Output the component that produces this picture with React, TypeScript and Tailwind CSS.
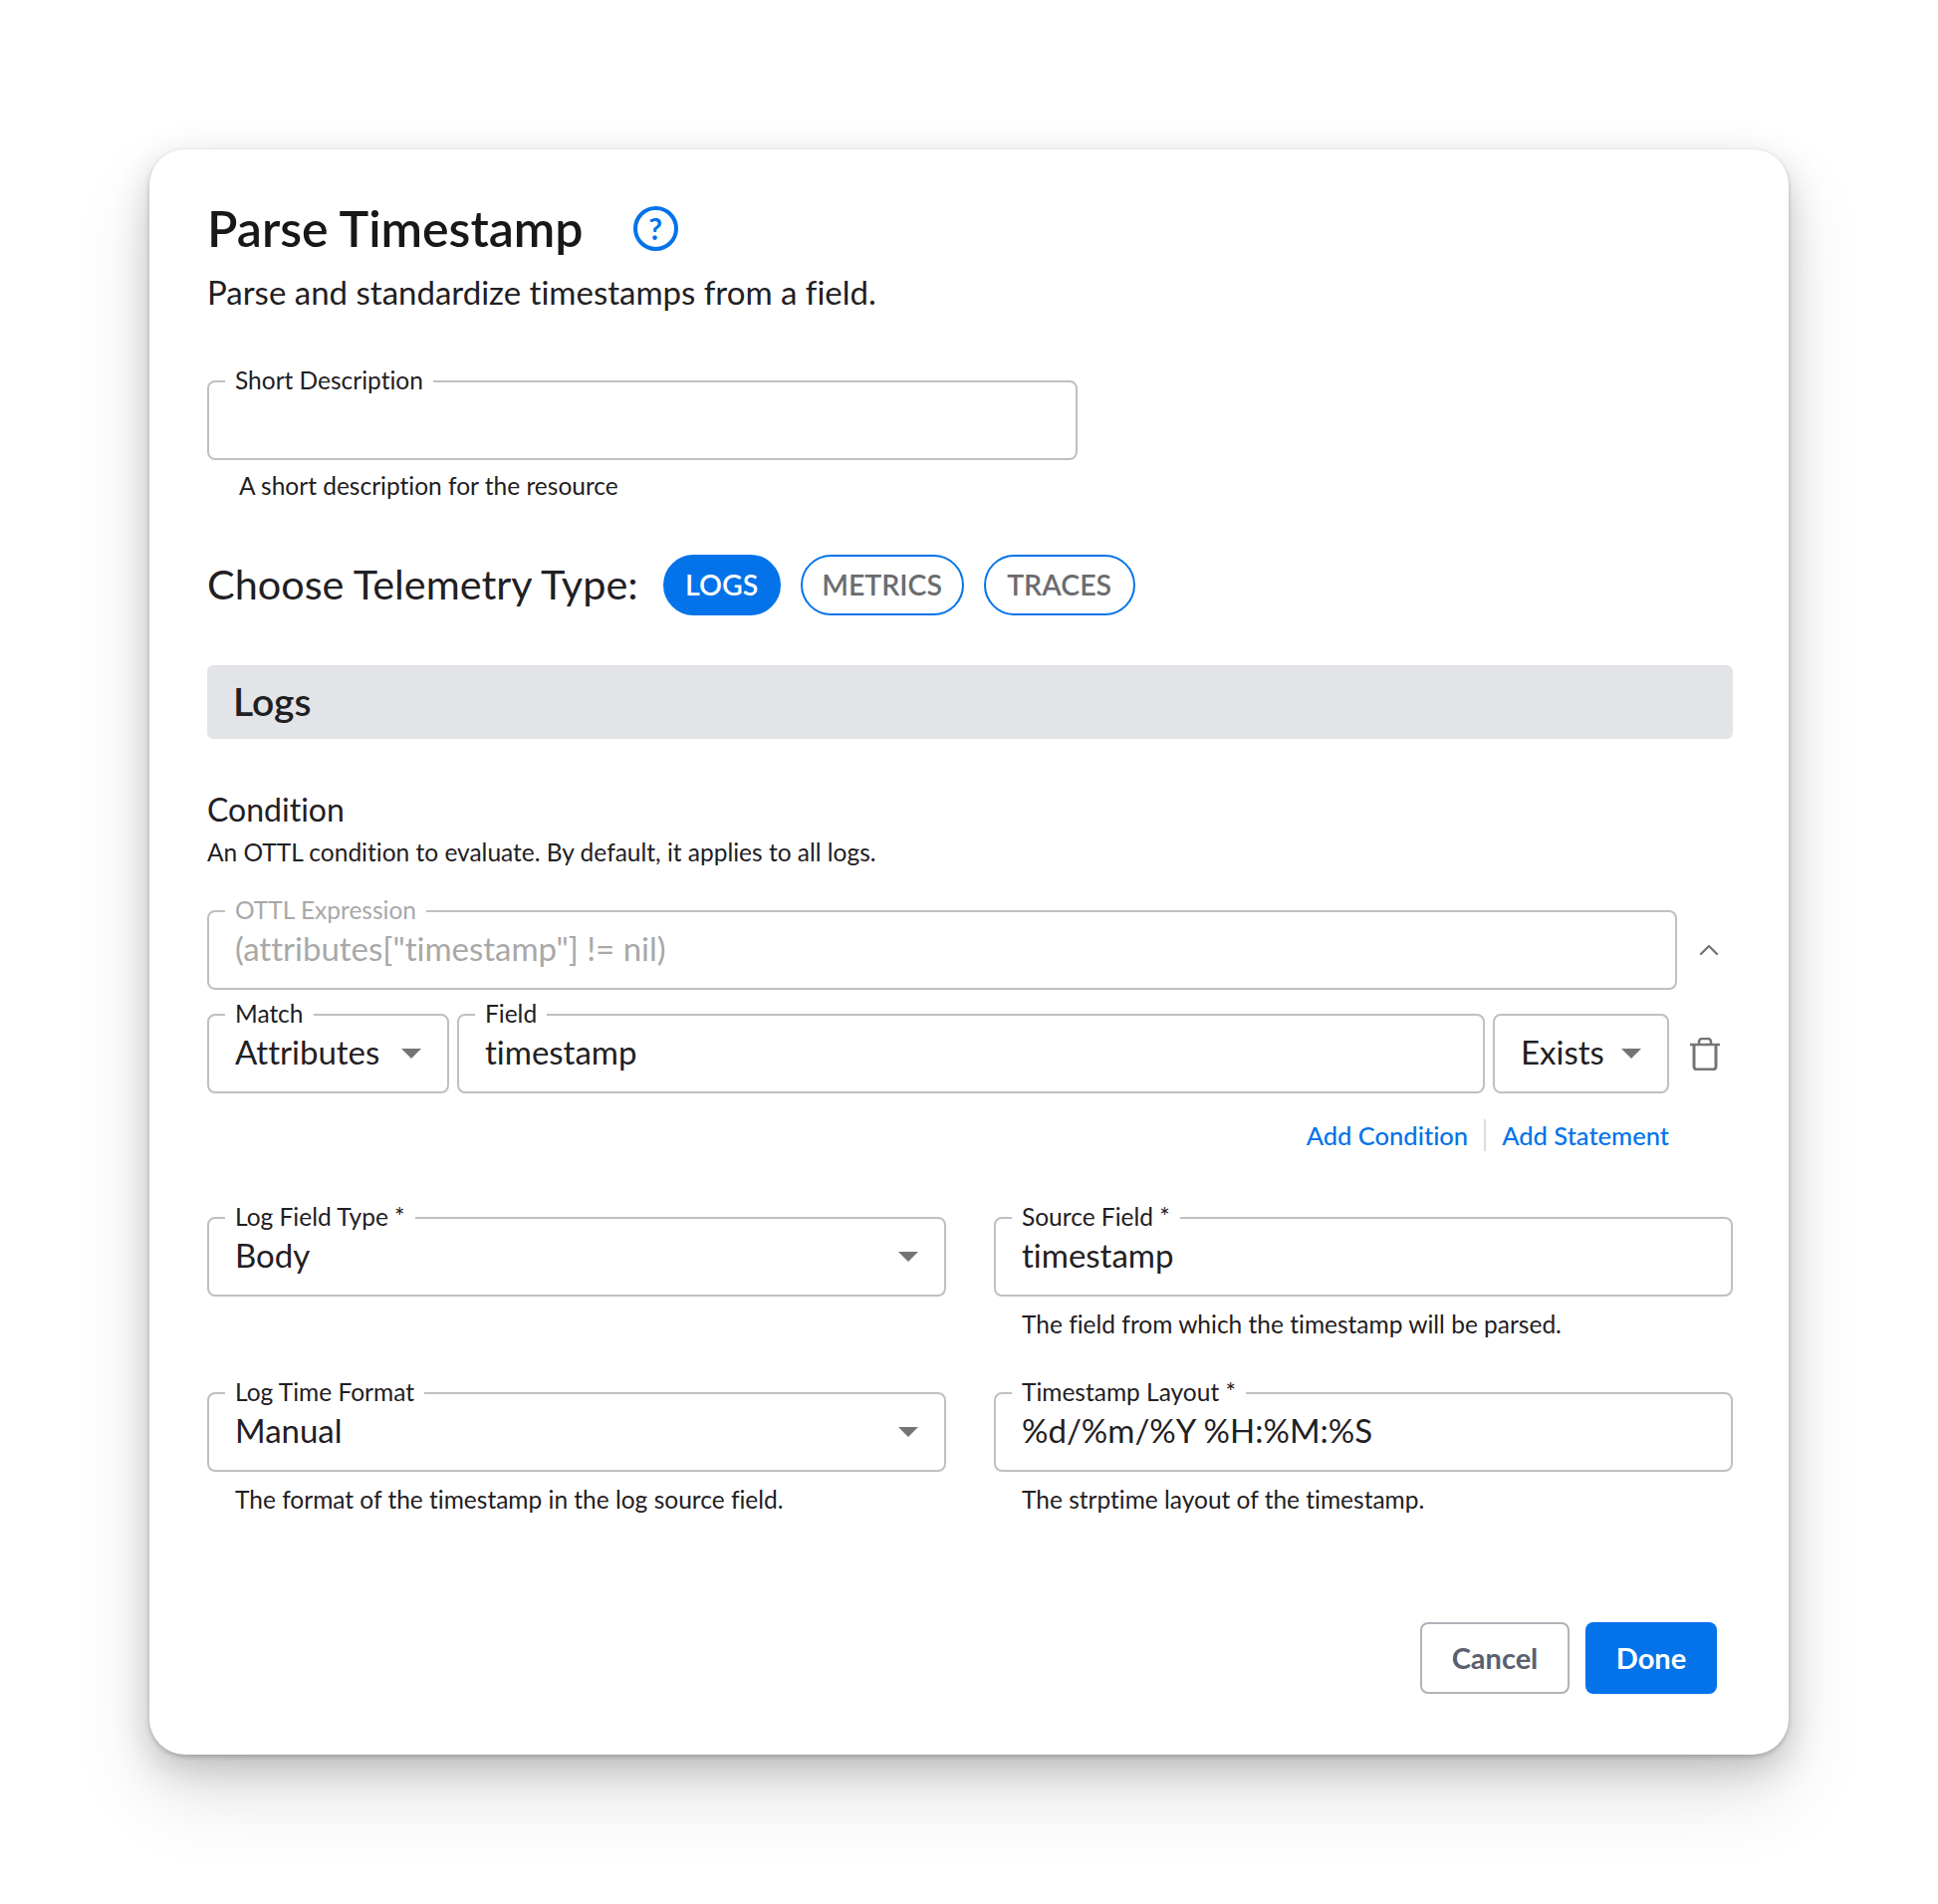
import { ChevronUp } from "lucide-react";
import type { ReactNode } from "react";

type OutlinedProps = {
  label?: string;
  value?: string;
  disabled?: boolean;
  select?: boolean;
  className?: string;
};

function Caret() {
  return (
    <svg viewBox="0 0 20 10" className="h-[10px] w-[20px] shrink-0 fill-[#757575]">
      <path d="M0 0h20L10 10z" />
    </svg>
  );
}

function TrashIcon() {
  return (
    <svg viewBox="0 0 30 33" className="ml-[21px] h-[33px] w-[30px] fill-none stroke-[#757575] stroke-[2.5]">
      <path d="M0 7h30" />
      <path d="M9 7V4a3 3 0 0 1 3-3h6a3 3 0 0 1 3 3v3" />
      <path d="M4 7v22a3 3 0 0 0 3 3h16a3 3 0 0 0 3-3V7" strokeWidth={3} />
    </svg>
  );
}

function Outlined({ label, value, disabled, select, className = "" }: OutlinedProps) {
  return (
    <div className={`relative flex h-20 items-center gap-4 rounded-lg border-2 border-[#c0c0c0] bg-white pl-[26px] pr-[26px] ${className}`}>
      {label && (
        <span className={`absolute -top-[18px] left-4 bg-white px-[10px] text-[24.5px] leading-8 ${disabled ? "text-[#a8a8a8]" : "text-[#1f2023]"}`}>
          {label}
        </span>
      )}
      <span className={`grow pb-1 text-[33px] leading-10 ${disabled ? "text-[#a8a8a8]" : "text-[#1f2023]"}`}>{value}</span>
      {select && <Caret />}
    </div>
  );
}

function Helper({ children, className = "" }: { children: ReactNode; className?: string }) {
  return <p className={`h-8 text-[24.5px] leading-8 text-[#1f2023] ${className}`}>{children}</p>;
}

function Chip({ label, active, className = "" }: { label: string; active?: boolean; className?: string }) {
  return (
    <span
      className={`flex h-[61px] items-center justify-center rounded-full border-2 border-[#0473ea] px-5 pb-px text-[28.5px] font-semibold ${
        active ? "bg-[#0473ea] text-white" : "bg-white text-[#6b6c70]"
      } ${className}`}
    >
      {label}
    </span>
  );
}

export default function App() {
  return (
    <div className="min-h-[1912px] bg-white px-[150px] py-[150px] font-['Lato',sans-serif] [font-variant-ligatures:none]">
      <div className="h-[1612px] rounded-[36px] bg-white pl-[58px] pr-[56px] pt-[52px] shadow-[0_2px_5px_rgba(0,0,0,0.22),0_14px_36px_rgba(0,0,0,0.18),0_40px_80px_rgba(0,0,0,0.12)]">
        <div className="flex h-[54px] items-center gap-[50px]">
          <h1 className="text-[50px] leading-[54px] font-semibold text-[#17181a]">Parse Timestamp</h1>
          <span className="flex h-[45px] w-[45px] items-center justify-center rounded-full border-[4px] border-[#0473ea] text-[30px] font-bold text-[#0473ea]">
            ?
          </span>
        </div>
        <p className="mt-[17px] text-[33px] leading-10 text-[#1f2023]">Parse and standardize timestamps from a field.</p>

        <Outlined label="Short Description" className="mt-[69px] w-[874px]" />
        <Helper className="mt-[10px] pl-8">A short description for the resource</Helper>

        <div className="mt-[53px] flex items-center">
          <h2 className="mr-[25px] pb-0.5 text-[41.4px] leading-[59px] text-[#1f2023]">Choose Telemetry Type:</h2>
          <div className="flex gap-5">
            <Chip label="LOGS" active className="w-[118px]" />
            <Chip label="METRICS" className="w-[164px]" />
            <Chip label="TRACES" className="w-[152px]" />
          </div>
        </div>

        <div className="mt-[50px] flex h-[74px] items-center rounded-md bg-[#e3e4e8] pb-0.5 pl-[26px] text-[39px] font-semibold text-[#1f2023]">
          Logs
        </div>

        <h3 className="mt-[51px] text-[32px] leading-10 text-[#1f2023]">Condition</h3>
        <p className="mt-[7px] h-8 text-[24.5px] leading-8 text-[#1f2023]">An OTTL condition to evaluate. By default, it applies to all logs.</p>

        <div className="mt-[42px] flex items-center">
          <Outlined label="OTTL Expression" value={'(attributes["timestamp"] != nil)'} disabled className="w-[1476px]" />
          <ChevronUp className="ml-[16px] h-8 w-8 text-[#757575]" strokeWidth={1.8} />
        </div>

        <div className="mt-6 flex items-center">
          <Outlined label="Match" value="Attributes" select className="w-[243px]" />
          <Outlined label="Field" value="timestamp" className="ml-2 w-[1032px]" />
          <Outlined value="Exists" select className="ml-2 w-[177px]" />
          <TrashIcon />
        </div>

        <div className="mt-[26px] flex h-8 items-center justify-end pr-[64px] text-[25.5px] font-medium text-[#0473ea]">
          <span>Add Condition</span>
          <span className="mx-4 h-8 w-0.5 bg-[#dcdcdc]" />
          <span>Add Statement</span>
        </div>

        <div className="mt-[66px] grid grid-cols-2 gap-x-12">
          <div className="h-[176px]">
            <Outlined label="Log Field Type *" value="Body" select />
          </div>
          <div className="h-[176px]">
            <Outlined label="Source Field *" value="timestamp" />
            <Helper className="mt-[12px] pl-7">The field from which the timestamp will be parsed.</Helper>
          </div>
          <div>
            <Outlined label="Log Time Format" value="Manual" select />
            <Helper className="mt-[12px] pl-7">The format of the timestamp in the log source field.</Helper>
          </div>
          <div>
            <Outlined label="Timestamp Layout *" value="%d/%m/%Y %H:%M:%S" />
            <Helper className="mt-[12px] pl-7">The strptime layout of the timestamp.</Helper>
          </div>
        </div>

        <div className="mt-[107px] flex justify-end gap-4 pr-4">
          <button className="h-[72px] w-[150px] rounded-lg border-2 border-[#b0b3b8] bg-white text-[29px] font-bold text-[#5b6070]">Cancel</button>
          <button className="h-[72px] w-[132px] rounded-lg bg-[#0473ea] text-[29px] font-bold text-white">Done</button>
        </div>
      </div>
    </div>
  );
}
